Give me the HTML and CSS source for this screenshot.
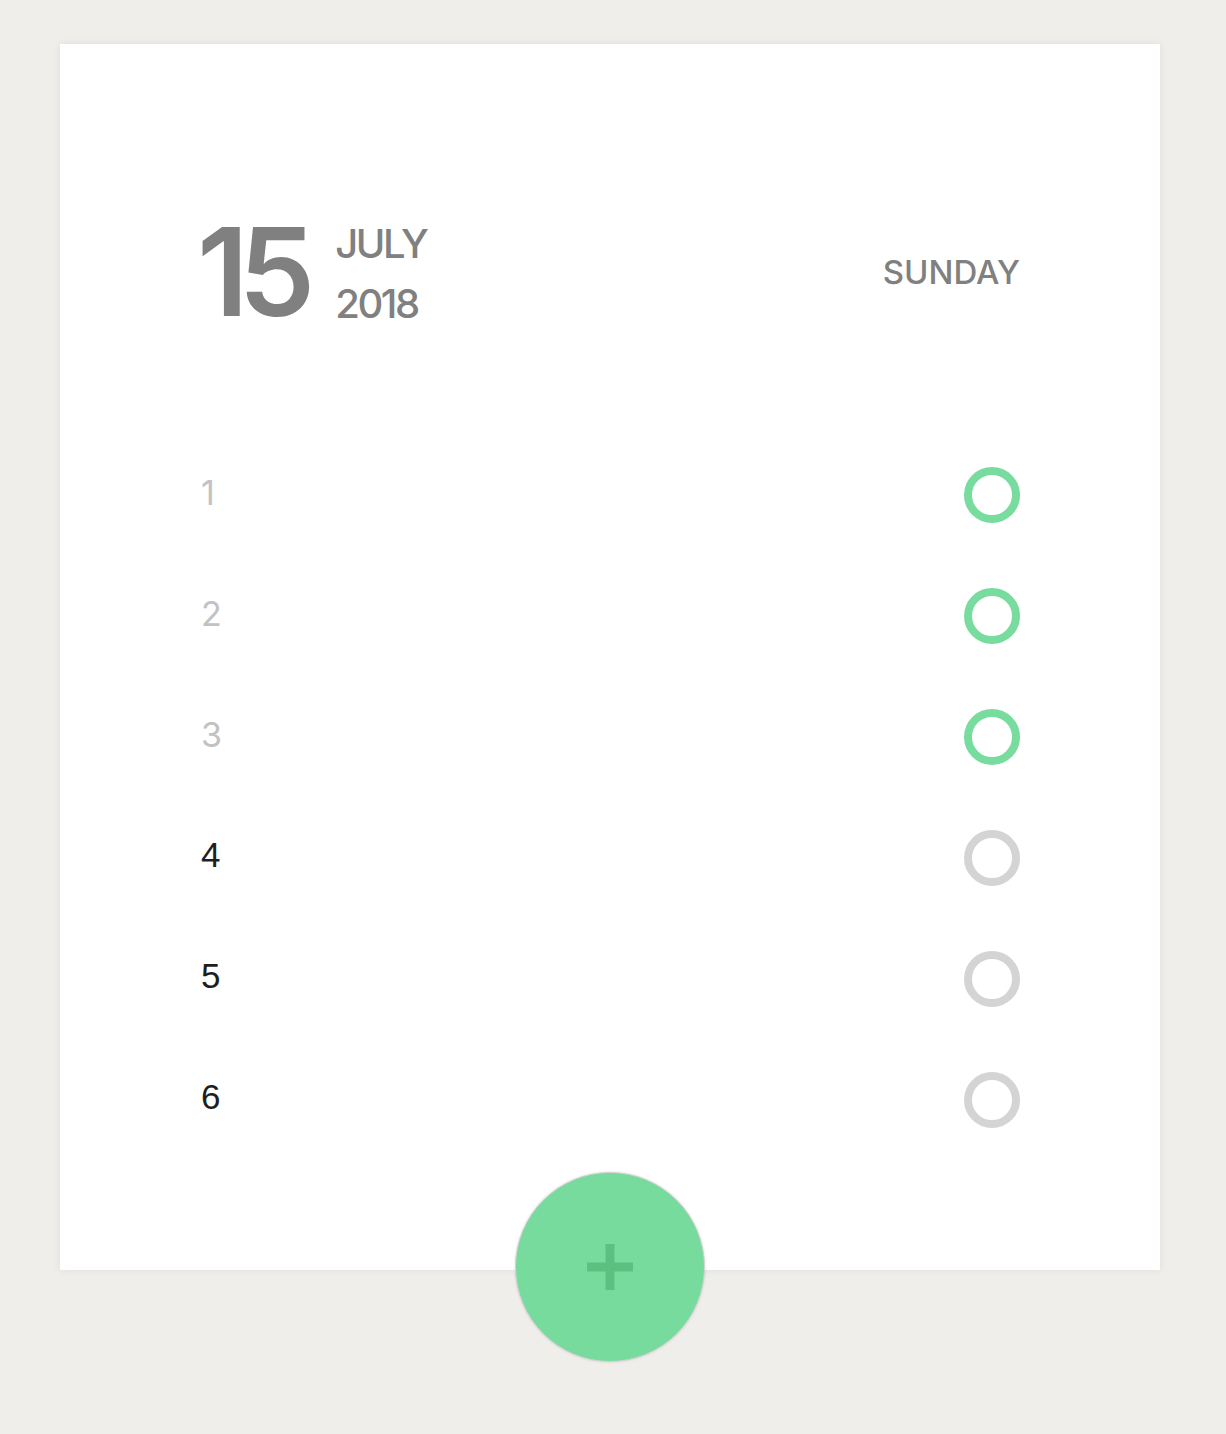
FILE: index.html
```html
<!DOCTYPE html>
<html lang="en">
<head>
<meta charset="utf-8">
<title>Daily tasks</title>
<link rel="stylesheet" href="styles.css">
</head>
<body>
<main class="card">
  <header class="date-header">
    <div class="date-left">
      <div class="day-num">15</div>
      <div class="month-year">
        <div class="month">JULY</div>
        <div class="year">2018</div>
      </div>
    </div>
    <div class="weekday">SUNDAY</div>
  </header>
  <ul class="tasks">
    <li class="task done"><span class="task-num">1</span><span class="check"></span></li>
    <li class="task done"><span class="task-num">2</span><span class="check"></span></li>
    <li class="task done"><span class="task-num">3</span><span class="check"></span></li>
    <li class="task"><span class="task-num">4</span><span class="check"></span></li>
    <li class="task"><span class="task-num">5</span><span class="check"></span></li>
    <li class="task"><span class="task-num">6</span><span class="check"></span></li>
  </ul>
  <button class="fab" aria-label="Add task">
    <svg width="46" height="46" viewBox="0 0 46 46"><rect x="0" y="18.5" width="46" height="9" fill="#5dbf80"/><rect x="18.5" y="0" width="9" height="46" fill="#5dbf80"/></svg>
  </button>
</main>
</body>
</html>
```
FILE: styles.css
```css
html, body {
  margin: 0;
  padding: 0;
}
body {
  background: #efeeea;
  font-family: Inter, "Liberation Sans", sans-serif;
  min-height: 1434px;
  padding-top: 44px;
  box-sizing: border-box;
}
.card {
  position: relative;
  width: 1100px;
  margin-left: 60px;
  box-sizing: border-box;
  background: #fff;
  box-shadow: 0 0 8px rgba(0, 0, 0, 0.07);
  padding: 166px 140px 110px 140px;
}
.date-header {
  display: flex;
  justify-content: space-between;
  align-items: center;
  color: #808080;
}
.date-left {
  display: flex;
  align-items: flex-start;
  gap: 30px;
}
.day-num {
  font-size: 122px;
  line-height: 124px;
  font-weight: 600;
  letter-spacing: -10px;
  margin-left: -3px;
}
.month-year {
  padding-top: 4px;
  font-size: 40px;
  line-height: 60px;
  font-weight: 500;
  letter-spacing: -2.5px;
}
.weekday {
  font-size: 33px;
  font-weight: 500;
  line-height: 40px;
}
.tasks {
  list-style: none;
  margin: 100px 0 0 0;
  padding: 0;
}
.task {
  height: 121px;
  display: flex;
  justify-content: space-between;
  align-items: center;
}
.task-num {
  font-family: "Liberation Sans", Arial, sans-serif;
  font-size: 35px;
  color: #1e1e1e;
  padding-left: 1px;
  padding-bottom: 5px;
}
.task.done .task-num {
  font-family: Inter, "Liberation Sans", sans-serif;
  color: #c2c2c2;
  font-size: 34px;
}
.check {
  width: 56px;
  height: 56px;
  box-sizing: border-box;
  border-radius: 50%;
  border: 8px solid #d4d4d4;
}
.task.done .check {
  border-color: #77dc9e;
}
.fab {
  position: absolute;
  left: 50%;
  bottom: -92px;
  transform: translateX(-50%);
  width: 190px;
  height: 190px;
  border-radius: 50%;
  background: #77db9e;
  border: 1px solid #d2d2d2;
  box-shadow: 0 0 3px rgba(0, 0, 0, 0.12);
  display: flex;
  align-items: center;
  justify-content: center;
  padding: 0;
  cursor: pointer;
}
.fab svg {
  display: block;
}
```
